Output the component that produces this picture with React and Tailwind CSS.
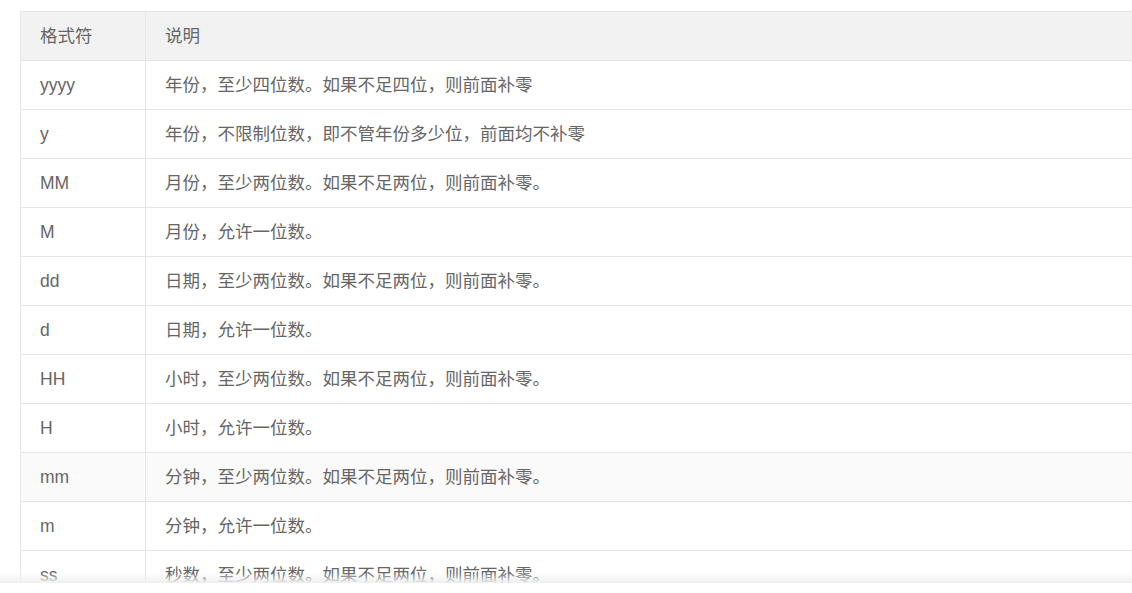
const rows = [
    ["yyyy", "年份，至少四位数。如果不足四位，则前面补零"],
    ["y", "年份，不限制位数，即不管年份多少位，前面均不补零"],
    ["MM", "月份，至少两位数。如果不足两位，则前面补零。"],
    ["M", "月份，允许一位数。"],
    ["dd", "日期，至少两位数。如果不足两位，则前面补零。"],
    ["d", "日期，允许一位数。"],
    ["HH", "小时，至少两位数。如果不足两位，则前面补零。"],
    ["H", "小时，允许一位数。"],
    ["mm", "分钟，至少两位数。如果不足两位，则前面补零。"],
    ["m", "分钟，允许一位数。"],
    ["ss", "秒数，至少两位数。如果不足两位，则前面补零。"],
];

export default function App() {
    return (
        <div
            className="bg-white w-[1132px] h-[593px] overflow-hidden"
            style={{ fontFamily: '"Liberation Sans", "Noto Sans CJK SC", sans-serif' }}
        >
            <div className="relative h-[583px] overflow-hidden pl-[20px] pt-[11px]">
                <table className="w-[1200px] border-collapse text-[17.5px] text-[#666]">
                    <thead>
                        <tr className="bg-[#f2f2f2] h-[49px]">
                            <th className="w-[125px] border border-[#e6e6e6] px-[19px] text-left font-normal">
                                格式符
                            </th>
                            <th className="border border-[#e6e6e6] px-[19px] text-left font-normal">
                                说明
                            </th>
                        </tr>
                    </thead>
                    <tbody>
                        {rows.map(([fmt, desc]) => (
                            <tr
                                key={fmt}
                                className={fmt === "mm" ? "h-[49px] bg-[#fafafa]" : "h-[49px] bg-white"}
                            >
                                <td className="border border-[#e6e6e6] px-[19px]">{fmt}</td>
                                <td className="border border-[#e6e6e6] px-[19px]">{desc}</td>
                            </tr>
                        ))}
                    </tbody>
                </table>
                <div className="absolute left-0 right-0 bottom-0 h-[10px] bg-gradient-to-b from-white/0 to-[#f0f0f0]"></div>
            </div>
        </div>
    );
}
